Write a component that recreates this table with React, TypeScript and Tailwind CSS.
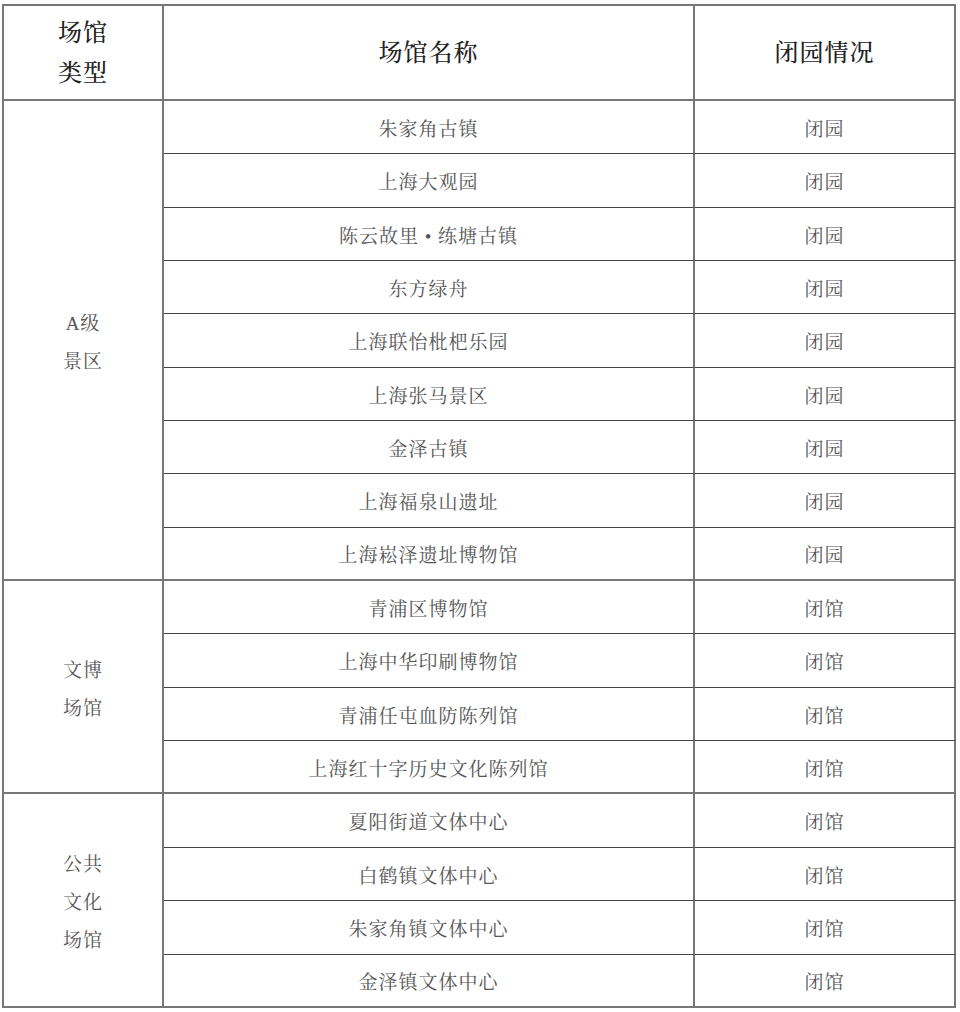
import React from "react";

const groups: { label: string[]; items: string[]; status: string }[] = [
  {
    label: ["A级", "景区"],
    status: "闭园",
    items: [
      "朱家角古镇",
      "上海大观园",
      "陈云故里 • 练塘古镇",
      "东方绿舟",
      "上海联怡枇杷乐园",
      "上海张马景区",
      "金泽古镇",
      "上海福泉山遗址",
      "上海崧泽遗址博物馆",
    ],
  },
  {
    label: ["文博", "场馆"],
    status: "闭馆",
    items: ["青浦区博物馆", "上海中华印刷博物馆", "青浦任屯血防陈列馆", "上海红十字历史文化陈列馆"],
  },
  {
    label: ["公共", "文化", "场馆"],
    status: "闭馆",
    items: ["夏阳街道文体中心", "白鹤镇文体中心", "朱家角镇文体中心", "金泽镇文体中心"],
  },
];

const spans: Record<number, string> = { 9: "row-span-9", 4: "row-span-4" };

export default function App() {
  return (
    <div
      className="w-[960px] h-[1012px] bg-white pt-[4px] pl-[2px]"
      style={{ fontFamily: '"Liberation Serif", "Noto Serif CJK SC", "Noto Sans CJK SC", serif' }}
    >
      <div className="w-[954px] grid grid-cols-[160px_531px_1fr] grid-rows-[95px_repeat(17,53.35px)] border-l-2 border-t-2 border-[#777]">
        <div className="border-r-2 border-b-2 border-[#777] flex flex-col items-center justify-center text-[24px] leading-[40px] tracking-[1px] text-[#222] font-medium">
          <span>场馆</span>
          <span>类型</span>
        </div>
        <div className="border-r-2 border-b-2 border-[#777] flex items-center justify-center text-[24px] tracking-[1px] text-[#222] font-medium">
          场馆名称
        </div>
        <div className="border-r-2 border-b-2 border-[#777] flex items-center justify-center text-[24px] tracking-[1px] text-[#222] font-medium">
          闭园情况
        </div>
        {groups.map((g, gi) => (
          <React.Fragment key={gi}>
            <div
              className={`${spans[g.items.length]} col-start-1 border-r-2 border-b-2 border-[#777] pt-[6px] flex flex-col items-center justify-center text-[19px] leading-[38px] tracking-[1px] text-[#555]`}
            >
              {g.label.map((l) => (
                <span key={l}>{l}</span>
              ))}
            </div>
            {g.items.map((item, i) => (
              <React.Fragment key={item}>
                <div
                  className={`col-start-2 border-r-2 border-[#777] pt-[6px] flex items-center justify-center text-[19px] tracking-[1px] text-[#555] ${
                    i === g.items.length - 1 ? "border-b-2" : "border-b border-b-[#444]"
                  }`}
                >
                  {item}
                </div>
                <div
                  className={`col-start-3 border-r-2 border-[#777] pt-[6px] flex items-center justify-center text-[19px] tracking-[1px] text-[#555] ${
                    i === g.items.length - 1 ? "border-b-2" : "border-b border-b-[#444]"
                  }`}
                >
                  {g.status}
                </div>
              </React.Fragment>
            ))}
          </React.Fragment>
        ))}
      </div>
    </div>
  );
}
